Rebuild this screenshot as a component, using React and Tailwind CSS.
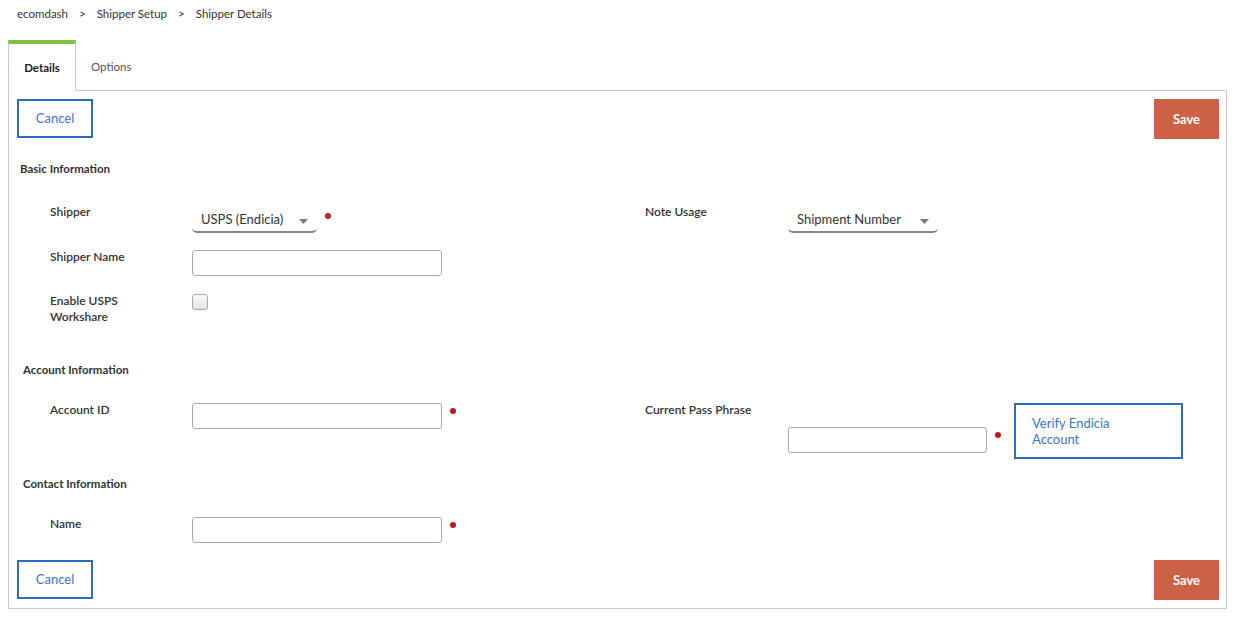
import React from 'react'

const font = { fontFamily: 'Lato, "Open Sans", Arial, sans-serif' }

function Dot({ className = '' }) {
  return <span className={`block w-[6px] h-[6px] rounded-full bg-[#c4161c] ${className}`} />
}

function Label({ children }) {
  return <div className="text-[12px] leading-[16px] font-semibold text-[#333] w-[142px] ml-[33px] shrink-0">{children}</div>
}

function RightLabel({ children }) {
  return <div className="text-[12px] leading-[16px] font-semibold text-[#333] w-[143px] shrink-0">{children}</div>
}

function TextInput({ width = 'w-[250px]', className = '' }) {
  return <div className={`h-[26px] ${width} border border-[#a9a9a9] rounded-[3px] bg-white ${className}`} />
}

function Select({ value, width, className = '' }) {
  return (
    <div className={`h-[27px] ${width} flex items-center justify-between pl-[9px] pr-[9px] pt-[2px] border-b-2 border-[#858585] rounded-b-[5px] ${className}`}>
      <span className="text-[13px] text-[#333] leading-none">{value}</span>
      <svg width="9" height="5" viewBox="0 0 9 5" className="mt-[3px]"><path d="M0 0h9L4.5 5z" fill="#7a7a7a" /></svg>
    </div>
  )
}

function ButtonRow() {
  return (
    <div className="flex justify-between items-start">
      <button className="h-[39px] w-[76px] pt-[1px] border-2 border-[#2a6ec4] text-[#3a74c8] text-[13px] bg-white">Cancel</button>
      <button className="h-[40px] w-[65px] pt-[1px] bg-[#cc6145] text-white text-[13px] font-bold mr-[-1px]">Save</button>
    </div>
  )
}

function Heading({ children, className = '' }) {
  return <div className={`text-[11.5px] leading-[16px] font-bold text-[#333] ${className}`}>{children}</div>
}

export default function App() {
  return (
    <div className="bg-white min-h-[631px] px-[8px] pt-[7px]" style={font}>
      <div className="text-[11.5px] leading-[14px] text-[#333] pl-[9px] flex gap-[11px]">
        <span>ecomdash</span><span>&gt;</span><span>Shipper Setup</span><span>&gt;</span><span>Shipper Details</span>
      </div>

      <div className="flex items-end mt-[19px] w-[1219px]">
        <div className="w-[68px] h-[51px] border-t-4 border-t-[#7dc242] border-x border-x-[#c8c8c8] bg-white -mb-px relative z-10 flex items-center justify-center">
          <span className="text-[11.5px] font-bold text-[#222]">Details</span>
        </div>
        <div className="h-[47px] pl-[15px] pt-[1px] flex items-center">
          <span className="text-[11.5px] text-[#555]">Options</span>
        </div>
      </div>

      <div className="border border-[#c8c8c8] w-[1219px] p-[8px]">
        <ButtonRow />

        <Heading className="mt-[22px] pl-[3px]">Basic Information</Heading>

        <div className="flex mt-[27px] h-[45px]">
          <div className="flex w-[628px]">
            <Label>Shipper</Label>
            <Select value="USPS (Endicia)" width="w-[125px]" className="mt-[2px]" />
            <Dot className="ml-[8px] mt-[9px]" />
          </div>
          <div className="flex">
            <RightLabel>Note Usage</RightLabel>
            <Select value="Shipment Number" width="w-[150px]" className="mt-[2px]" />
          </div>
        </div>

        <div className="flex h-[44px]">
          <Label>Shipper Name</Label>
          <TextInput className="mt-[1px]" />
        </div>

        <div className="flex h-[69px]">
          <Label>Enable USPS<br />Workshare</Label>
          <div className="w-[16px] h-[16px] mt-[1px] border border-[#a9a9a9] rounded-[3px] bg-gradient-to-b from-[#fafafa] to-[#e4e4e4]" />
        </div>

        <Heading className="pl-[6px]">Account Information</Heading>

        <div className="flex mt-[24px] h-[74px]">
          <div className="flex w-[628px]">
            <Label>Account ID</Label>
            <TextInput className="mt-[1px]" />
            <Dot className="ml-[8px] mt-[6px]" />
          </div>
          <div className="flex">
            <RightLabel>Current Pass Phrase</RightLabel>
            <TextInput width="w-[199px]" className="mt-[25px]" />
            <Dot className="ml-[8px] mt-[30px]" />
            <button className="ml-[13px] mt-[1px] w-[169px] h-[56px] border-2 border-[#2a6ec4] text-left pl-[16px] text-[13px] leading-[16px] text-[#3a74c8] bg-white">
              Verify Endicia<br />Account
            </button>
          </div>
        </div>

        <Heading className="pl-[6px]">Contact Information</Heading>

        <div className="flex mt-[24px] h-[44px]">
          <Label>Name</Label>
          <TextInput className="mt-[1px]" />
          <Dot className="ml-[8px] mt-[6px]" />
        </div>

        <ButtonRow />
      </div>
    </div>
  )
}
